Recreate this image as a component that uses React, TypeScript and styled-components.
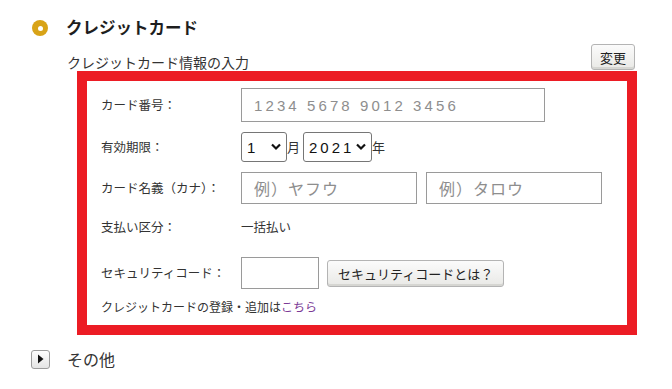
import React from 'react'
import styled, { createGlobalStyle } from 'styled-components'

const GlobalStyle = createGlobalStyle`
  html, body {
    margin: 0;
    padding: 0;
    background: #ffffff;
  }
  body {
    font-family: 'Noto Sans CJK JP', 'Noto Sans', sans-serif;
    color: #333333;
  }
`

/* Page */
const Page = styled.div`
  width: 605px;
  padding: 16px 0 0 32px;
`
const SectionHead = styled.div`
  display: flex;
  align-items: center;
  height: 22px;
  gap: 18px;
`
const Radio = styled.span`
  width: 16px;
  height: 16px;
  border-radius: 50%;
  background: #d8a317;
  display: flex;
  align-items: center;
  justify-content: center;
  margin-top: 2px;
  &::after {
    content: '';
    width: 5px;
    height: 5px;
    border-radius: 50%;
    background: #ffffff;
  }
`
const Title = styled.span`
  font-size: 16.5px;
  font-weight: bold;
  line-height: 22px;
  color: #1e1e1e;
`
const Body = styled.div`
  margin-left: 35px;
`
const SubRow = styled.div`
  display: flex;
  align-items: flex-end;
  justify-content: space-between;
  margin-top: 6px;
  height: 27px;
`
const SubTitle = styled.span`
  font-size: 14px;
  line-height: 18px;
`
const GrayButton = styled.button<{ $h: number }>`
  font-family: 'Noto Sans CJK JP', sans-serif;
  font-size: 13px;
  color: #222;
  height: ${(p) => p.$h}px;
  padding: 0 10px;
  border: 1px solid #b4b4b4;
  border-radius: 3px;
  background: linear-gradient(#fbfbfb, #e9e9e6);
  box-shadow: inset 0 -2px 0 #d6d6d2;
  line-height: 1;
`
const ChangeButton = styled(GrayButton)`
  margin: 0 2px 1px 0;
  width: 44px;
  padding: 0;
`

/* Red box */
const RedBox = styled.div`
  margin-left: 10px;
  border: 10px solid #ec1c24;
  padding: 7px 14px 8px;
  display: flex;
  flex-direction: column;
`
const Row = styled.div<{ $h: number; $mt: number }>`
  display: flex;
  align-items: center;
  height: ${(p) => p.$h}px;
  margin-top: ${(p) => p.$mt}px;
`
const Label = styled.span`
  width: 140px;
  flex: none;
  font-size: 12.5px;
  line-height: 16px;
`
const Value = styled.span<{ $size?: number }>`
  font-size: ${(p) => p.$size ?? 12.5}px;
  line-height: 16px;
`
const TextInput = styled.input<{ $w: number; $h: number; $spaced?: boolean }>`
  box-sizing: border-box;
  width: ${(p) => p.$w}px;
  height: ${(p) => p.$h}px;
  border: 1px solid #9a9a9a;
  border-radius: 0;
  padding: 0 12px;
  font-family: ${(p) => (p.$spaced ? "'Liberation Sans', sans-serif" : "'Noto Sans CJK JP', sans-serif")};
  font-size: ${(p) => (p.$spaced ? 15 : 16)}px;
  letter-spacing: ${(p) => (p.$spaced ? 3.1 : 1)}px;
  outline: none;
  &::placeholder {
    color: #8e8e8e;
  }
`
const Gap = styled.span<{ $w: number }>`
  width: ${(p) => p.$w}px;
  flex: none;
`
const SelectWrap = styled.span<{ $w: number }>`
  position: relative;
  display: inline-flex;
  width: ${(p) => p.$w}px;
  height: 30px;
  flex: none;
`
const Select = styled.select`
  appearance: none;
  box-sizing: border-box;
  width: 100%;
  height: 100%;
  border: 1px solid #767676;
  border-radius: 3px;
  background: #ffffff;
  padding: 0 0 0 5px;
  font-family: 'Liberation Sans', sans-serif;
  font-size: 15px;
  letter-spacing: 3px;
  color: #111;
`
const Chevron = styled.svg`
  position: absolute;
  right: 6px;
  top: 11px;
  pointer-events: none;
`
const Unit = styled.span`
  font-size: 13px;
  line-height: 16px;
  width: 16px;
  flex: none;
`
const Link = styled.a`
  color: #7b3a96;
  text-decoration: none;
`

/* Other */
const OtherRow = styled.div`
  display: flex;
  align-items: center;
  gap: 17px;
  margin: 14px 0 0 -1px;
  height: 20px;
`
const ToggleBox = styled.span`
  box-sizing: border-box;
  width: 19px;
  height: 19px;
  border: 1px solid #9c9c9c;
  border-radius: 3px;
  background: linear-gradient(#fdfdfd, #e4e4e4);
  display: flex;
  align-items: center;
  justify-content: center;
`
const OtherText = styled.span`
  font-size: 16px;
  line-height: 20px;
`

const ChevronIcon = () => (
  <Chevron width="10" height="8" viewBox="0 0 10 8">
    <path d="M1 1.5 L5 5.5 L9 1.5" fill="none" stroke="#111" strokeWidth="2.2" />
  </Chevron>
)

const App = () => {
  return (
    <Page>
      <GlobalStyle />
      <SectionHead>
        <Radio />
        <Title>クレジットカード</Title>
      </SectionHead>
      <Body>
        <SubRow>
          <SubTitle>クレジットカード情報の入力</SubTitle>
          <ChangeButton $h={26}>変更</ChangeButton>
        </SubRow>
        <RedBox>
          <Row $h={34} $mt={0}>
            <Label>カード番号：</Label>
            <TextInput $w={304} $h={34} $spaced placeholder="1234 5678 9012 3456" />
          </Row>
          <Row $h={30} $mt={10}>
            <Label>有効期限：</Label>
            <SelectWrap $w={46}>
              <Select defaultValue="1">
                <option value="1">1</option>
              </Select>
              <ChevronIcon />
            </SelectWrap>
            <Unit>月</Unit>
            <SelectWrap $w={69}>
              <Select defaultValue="2021">
                <option value="2021">2021</option>
              </Select>
              <ChevronIcon />
            </SelectWrap>
            <Unit>年</Unit>
          </Row>
          <Row $h={32} $mt={10}>
            <Label>カード名義（カナ）：</Label>
            <TextInput $w={176} $h={32} placeholder="例）ヤフウ" />
            <Gap $w={9} />
            <TextInput $w={176} $h={32} placeholder="例）タロウ" />
          </Row>
          <Row $h={26} $mt={10}>
            <Label>支払い区分：</Label>
            <Value>一括払い</Value>
          </Row>
          <Row $h={32} $mt={17}>
            <Label>セキュリティコード：</Label>
            <TextInput $w={78} $h={32} />
            <Gap $w={8} />
            <GrayButton $h={27}>セキュリティコードとは？</GrayButton>
          </Row>
          <Row $h={20} $mt={8}>
            <Value $size={12}>
              クレジットカードの登録・追加は<Link href="#">こちら</Link>
            </Value>
          </Row>
        </RedBox>
      </Body>
      <OtherRow>
        <ToggleBox>
          <svg width="7" height="10" viewBox="0 0 7 10">
            <path d="M1 0.5 L6.5 5 L1 9.5 Z" fill="#111" />
          </svg>
        </ToggleBox>
        <OtherText>その他</OtherText>
      </OtherRow>
    </Page>
  )
}

export default App
